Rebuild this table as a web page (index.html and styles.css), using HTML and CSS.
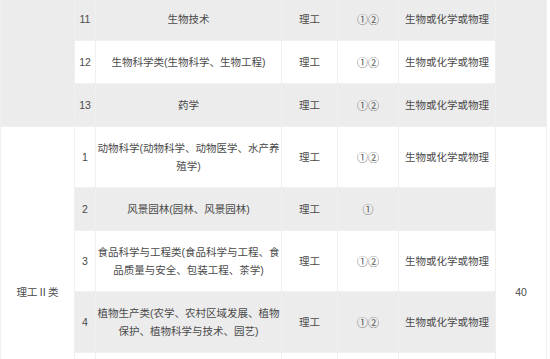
FILE: index.html
```html
<!DOCTYPE html>
<html lang="zh-CN">
<head>
<meta charset="utf-8">
<link rel="stylesheet" href="styles.css">
</head>
<body>
<table class="plan">
  <colgroup>
    <col class="c-cat"><col class="c-no"><col class="c-major"><col class="c-type"><col class="c-req"><col class="c-subj"><col class="c-num">
  </colgroup>
  <tbody>
    <tr>
      <td rowspan="3"></td>
      <td>11</td><td>生物技术</td><td>理工</td><td class="req">①②</td><td>生物或化学或物理</td>
      <td rowspan="3"></td>
    </tr>
    <tr><td>12</td><td>生物科学类(生物科学、生物工程)</td><td>理工</td><td class="req">①②</td><td>生物或化学或物理</td></tr>
    <tr><td>13</td><td>药学</td><td>理工</td><td class="req">①②</td><td>生物或化学或物理</td></tr>
    <tr>
      <td rowspan="6" class="cat">理工Ⅱ类</td>
      <td>1</td><td>动物科学(动物科学、动物医学、水产养殖学)</td><td>理工</td><td class="req">①②</td><td>生物或化学或物理</td>
      <td rowspan="6">40</td>
    </tr>
    <tr><td>2</td><td>风景园林(园林、风景园林)</td><td>理工</td><td class="req">①</td><td></td></tr>
    <tr><td>3</td><td>食品科学与工程类(食品科学与工程、食品质量与安全、包装工程、茶学)</td><td>理工</td><td class="req">①②</td><td>生物或化学或物理</td></tr>
    <tr><td>4</td><td>植物生产类(农学、农村区域发展、植物保护、植物科学与技术、园艺)</td><td>理工</td><td class="req">①②</td><td>生物或化学或物理</td></tr>
    <tr><td>5</td><td>林学类(林学、森林保护、木材科学与工程、林产化工)</td><td>理工</td><td class="req">①②</td><td>生物或化学或物理</td></tr>
    <tr><td>6</td><td>园林</td><td>理工</td><td class="req">①</td><td></td></tr>
  </tbody>
</table>
</body>
</html>
```

FILE: styles.css
```css
html, body {
  margin: 0;
  padding: 0;
  background: #ffffff;
}

.plan {
  border-collapse: collapse;
  table-layout: fixed;
  width: 546px;
  margin-top: -3px;
  font-family: "Liberation Sans", "Noto Sans CJK SC", sans-serif;
  font-size: 10.5px;
  line-height: 18px;
  color: #4a4a4a;
}

.c-cat { width: 74px; }
.c-no { width: 21px; }
.c-major { width: 186px; }
.c-type { width: 56px; }
.c-req { width: 61px; }
.c-subj { width: 97px; }
.c-num { width: 51px; }

.plan td {
  border: 1px solid #f0f0f0;
  padding: 12px 1px;
  text-align: center;
  vertical-align: middle;
}

.plan td.cat {
  font-family: "Noto Sans CJK SC", sans-serif;
}

.plan td.req {
  font-family: "Noto Sans CJK SC", sans-serif;
  font-size: 11px;
  color: #555555;
}

.plan tr:nth-child(odd) {
  background: #ececec;
}

.plan tr:nth-child(even) {
  background: #ffffff;
}
```
